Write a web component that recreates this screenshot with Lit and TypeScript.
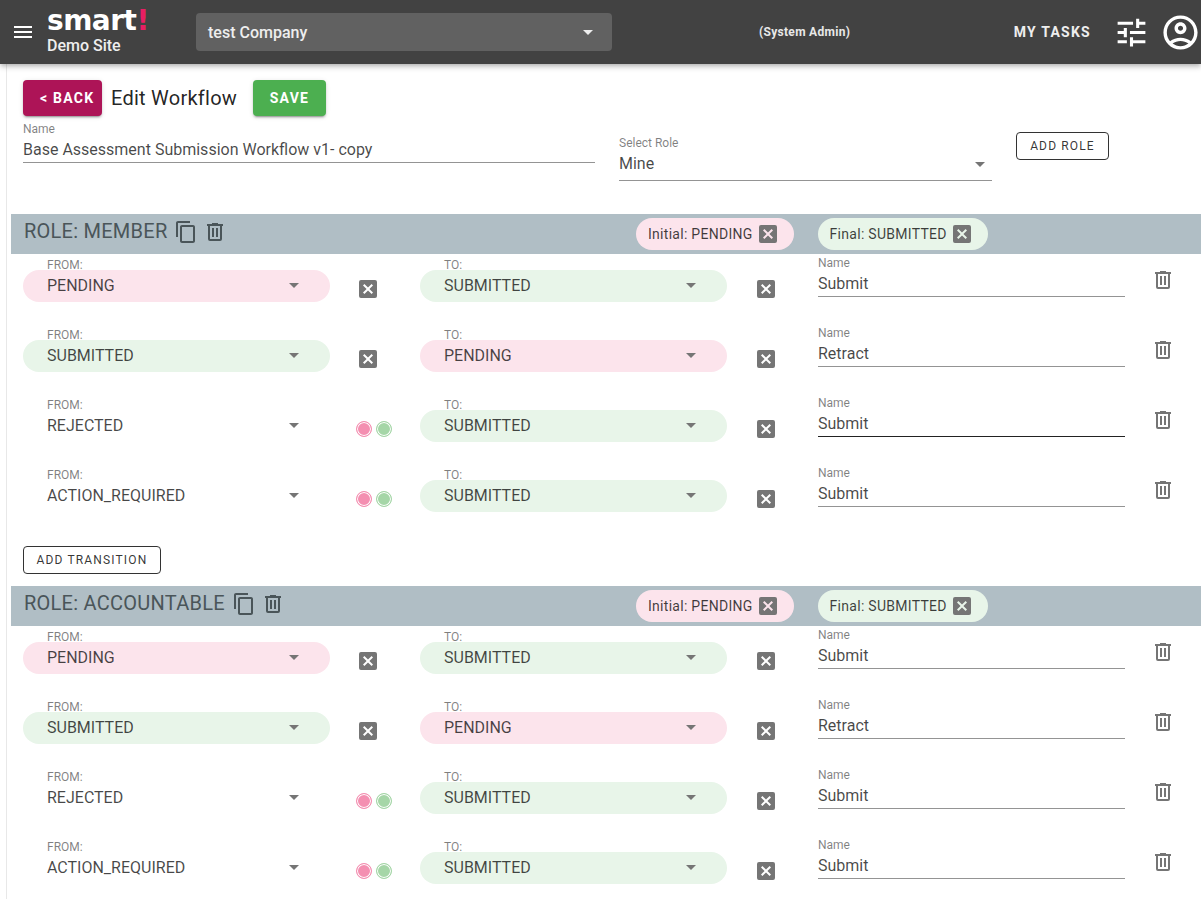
import { LitElement, html, css, svg } from 'lit';
import { customElement } from 'lit/decorators.js';

type Tone = 'pending' | 'submitted' | 'plain';

interface Transition {
  from: string;
  fromTone: Tone;
  to: string;
  toTone: Tone;
  name: string;
  focused?: boolean;
}

const PATHS = {
  menu: 'M3 18h18v-2H3v2zm0-5h18v-2H3v2zm0-7v2h18V6H3z',
  tune: 'M3 17v2h6v-2H3zM3 5v2h10V5H3zm10 16v-2h8v-2h-8v-2h-2v6h2zM7 9v2H3v2h4v2h2V9H7zm14 4v-2H11v2h10zm-6-4h2V7h4V5h-4V3h-2v6z',
  account: 'M12 2C6.48 2 2 6.48 2 12s4.48 10 10 10 10-4.48 10-10S17.52 2 12 2zM7.35 18.5C8.66 17.56 10.26 17 12 17s3.34.56 4.65 1.5C15.34 19.44 13.74 20 12 20s-3.34-.56-4.65-1.5zm10.79-1.38C16.45 15.8 14.32 15 12 15s-4.45.8-6.14 2.12C4.7 15.73 4 13.95 4 12c0-4.42 3.58-8 8-8s8 3.58 8 8c0 1.95-.7 3.73-1.86 5.12zM12 6c-1.93 0-3.5 1.57-3.5 3.5S10.07 13 12 13s3.5-1.57 3.5-3.5S13.93 6 12 6zm0 5c-.83 0-1.5-.67-1.5-1.5S11.17 8 12 8s1.5.67 1.5 1.5S12.83 11 12 11z',
  copy: 'M16 1H4c-1.1 0-2 .9-2 2v14h2V3h12V1zm3 4H8c-1.1 0-2 .9-2 2v14c0 1.1.9 2 2 2h11c1.1 0 2-.9 2-2V7c0-1.1-.9-2-2-2zm0 16H8V7h11v14z',
  trash: 'M9,3V4H4V6H5V19A2,2 0 0,0 7,21H17A2,2 0 0,0 19,19V6H20V4H15V3H9M7,6H17V19H7V6M9,8V17H11V8H9M13,8V17H15V8H13Z',
  close: 'M19,3H5A2,2 0 0,0 3,5V19A2,2 0 0,0 5,21H19A2,2 0 0,0 21,19V5A2,2 0 0,0 19,3M15.6,17L12,13.4L8.4,17L7,15.6L10.6,12L7,8.4L8.4,7L12,10.6L15.6,7L17,8.4L13.4,12L17,15.6L15.6,17Z',
};

const TRANSITIONS: Transition[] = [
  { from: 'PENDING', fromTone: 'pending', to: 'SUBMITTED', toTone: 'submitted', name: 'Submit' },
  { from: 'SUBMITTED', fromTone: 'submitted', to: 'PENDING', toTone: 'pending', name: 'Retract' },
  { from: 'REJECTED', fromTone: 'plain', to: 'SUBMITTED', toTone: 'submitted', name: 'Submit' },
  { from: 'ACTION_REQUIRED', fromTone: 'plain', to: 'SUBMITTED', toTone: 'submitted', name: 'Submit' },
];

const icon = (d: string, size: number, cls = '') => html`
  <svg class=${cls} width=${size} height=${size} viewBox="0 0 24 24" fill="currentColor">${svg`<path d=${d}></path>`}</svg>
`;

@customElement('app-root')
export class AppRoot extends LitElement {
  static override styles = css`
    :host {
      display: block;
      height: 100vh;
      overflow: hidden;
      font-family: Roboto, 'Noto Sans', sans-serif;
      color: rgba(0, 0, 0, 0.87);
      background: #fff;
    }

    svg {
      display: block;
      flex: none;
    }

    .topbar {
      position: relative;
      z-index: 2;
      display: flex;
      align-items: center;
      height: 64px;
      background: #424242;
      color: #fff;
      box-shadow: 0 2px 4px -1px rgba(0, 0, 0, 0.2), 0 4px 5px 0 rgba(0, 0, 0, 0.14);
    }

    .menu {
      margin-left: 11px;
      width: 36px;
    }

    .brand {
      width: 149px;
      color: #eee;
    }

    .logo {
      height: 26px;
      font-family: 'DejaVu Sans', sans-serif;
      font-weight: 700;
      font-size: 28px;
      line-height: 25px;
      letter-spacing: -0.5px;
      color: #fff;
    }

    .logo span {
      color: #e91e63;
    }

    .site {
      font-size: 16px;
      font-weight: 500;
      line-height: 20px;
      margin-top: 2px;
    }

    .company {
      display: flex;
      align-items: center;
      justify-content: space-between;
      box-sizing: border-box;
      width: 416px;
      height: 38px;
      padding: 0 19px 0 12px;
      background: #616161;
      border-radius: 4px;
      font-size: 16px;
      font-weight: 500;
      color: #eee;
    }

    .company .arrow {
      border-top-color: #eee;
    }

    .admin {
      margin-left: 147px;
      font-size: 12px;
      font-weight: 700;
      letter-spacing: 0.3px;
      color: #e8e8e8;
    }

    .tasks {
      margin-left: auto;
      font-size: 14px;
      font-weight: 700;
      letter-spacing: 1.25px;
      color: #eee;
    }

    .tune {
      margin-left: 22px;
    }

    .account {
      margin: 0 0 0 10px;
    }

    .arrow {
      flex: none;
      width: 0;
      height: 0;
      border-left: 5px solid transparent;
      border-right: 5px solid transparent;
      border-top: 5px solid #757575;
    }

    main {
      margin-left: 6px;
      padding-left: 4px;
      border-left: 1px solid #e8e8e8;
    }

    .title-row {
      display: flex;
      align-items: center;
      height: 36px;
      padding: 16px 0 0 12px;
    }

    .btn {
      display: flex;
      align-items: center;
      box-sizing: border-box;
      height: 36px;
      border-radius: 4px;
      color: #fff;
      font-size: 14px;
      font-weight: 700;
      letter-spacing: 1.25px;
      box-shadow: 0 3px 1px -2px rgba(0, 0, 0, 0.2), 0 2px 2px 0 rgba(0, 0, 0, 0.14), 0 1px 5px 0 rgba(0, 0, 0, 0.12);
    }

    .back {
      width: 79px;
      padding-left: 17px;
      background: #ad1457;
    }

    .save {
      justify-content: center;
      width: 73px;
      margin-left: 16px;
      background: #4caf50;
    }

    h1 {
      width: 126px;
      margin: 0 0 0 9px;
      font-size: 20px;
      font-weight: 400;
      line-height: 36px;
      letter-spacing: 0.25px;
      white-space: nowrap;
    }

    .form-row {
      display: grid;
      grid-template-columns: 572px 373px 93px;
      column-gap: 24px;
      align-items: start;
      height: 98px;
      padding: 6px 0 0 12px;
      box-sizing: border-box;
    }

    .field-label {
      font-size: 12px;
      line-height: 14px;
      color: rgba(0, 0, 0, 0.5);
    }

    .field-value {
      display: flex;
      align-items: center;
      justify-content: space-between;
      line-height: 24px;
      margin-top: 2px;
      font-size: 16px;
      color: rgba(0, 0, 0, 0.72);
      border-bottom: 1px solid #949494;
    }

    .field-value.focused {
      border-bottom-color: #222;
    }

    .role-select {
      margin-top: 14px;
    }

    .role-select .field-value {
      margin-top: 0;
      padding: 2px 7px 4px 0;
    }

    .outlined {
      display: flex;
      align-items: center;
      justify-content: center;
      box-sizing: border-box;
      height: 28px;
      border: 1px solid #333;
      border-radius: 4px;
      background: #fff;
      font-size: 12px;
      font-weight: 400;
      letter-spacing: 1.15px;
      color: rgba(0, 0, 0, 0.8);
    }

    .add-role {
      margin-top: 10px;
    }

    .add-transition {
      width: 138px;
      margin: 12px 0 12px 12px;
    }

    .role-head {
      display: flex;
      align-items: center;
      height: 40px;
      padding-left: 13px;
      background: #b0bec5;
    }

    .role-title {
      display: flex;
      align-items: center;
      width: 612px;
      height: 34px;
      margin-bottom: 6px;
      color: #4a5559;
    }

    .role-title span {
      font-size: 20px;
      letter-spacing: 0.25px;
      margin-right: 7px;
    }

    .role-title svg {
      margin-top: 2px;
    }

    .role-title svg:last-child {
      margin-left: 5px;
    }

    .chip {
      display: flex;
      align-items: center;
      box-sizing: border-box;
      height: 32px;
      padding: 0 14px 0 12px;
      margin-right: 24px;
      border-radius: 16px;
      font-size: 14px;
      letter-spacing: 0.28px;
      color: rgba(0, 0, 0, 0.75);
    }

    .chip svg {
      margin-left: 3px;
      color: #757575;
    }

    .pending {
      background: #fce4ec;
    }

    .submitted {
      background: #e8f5e9;
    }

    .row {
      display: grid;
      grid-template-columns: 307px 90px 307px 91px 307px 1fr;
      height: 70px;
      padding-left: 12px;
    }

    .pick {
      padding-top: 4px;
    }

    .pick-label {
      position: relative;
      padding-left: 24px;
      margin-bottom: -2px;
      font-size: 12px;
      line-height: 14px;
      color: rgba(0, 0, 0, 0.5);
    }

    .pill {
      display: flex;
      align-items: center;
      justify-content: space-between;
      box-sizing: border-box;
      height: 32px;
      padding: 0 31px 2px 24px;
      border-radius: 16px;
      font-size: 16px;
      color: rgba(0, 0, 0, 0.72);
    }

    .clear {
      padding: 23px 0 0 26px;
      color: #757575;
    }

    .clear.to {
      padding-left: 27px;
    }

    .dots {
      display: flex;
      gap: 4px;
      padding: 27px 0 0 26px;
    }

    .dot {
      box-sizing: border-box;
      width: 16px;
      height: 16px;
      border-radius: 50%;
      border: 1px solid;
      box-shadow: inset 0 0 0 1px #fff;
    }

    .dot.red {
      background: #f48fb1;
      border-color: #f48fb1;
    }

    .dot.green {
      background: #a5d6a7;
      border-color: #a5d6a7;
    }

    .name {
      padding-top: 2px;
    }

    .remove {
      padding: 14px 0 0 26px;
      color: #757575;
    }
  `;

  private renderRow(t: Transition) {
    return html`
      <div class="row">
        <div class="pick">
          <div class="pick-label">FROM:</div>
          <div class="pill ${t.fromTone}">${t.from}<i class="arrow"></i></div>
        </div>
        ${t.fromTone === 'plain'
          ? html`<div class="dots"><div class="dot red"></div><div class="dot green"></div></div>`
          : html`<div class="clear">${icon(PATHS.close, 24)}</div>`}
        <div class="pick">
          <div class="pick-label">TO:</div>
          <div class="pill ${t.toTone}">${t.to}<i class="arrow"></i></div>
        </div>
        <div class="clear to">${icon(PATHS.close, 24)}</div>
        <div class="name">
          <div class="field-label">Name</div>
          <div class="field-value ${t.focused ? 'focused' : ''}">${t.name}</div>
        </div>
        <div class="remove">${icon(PATHS.trash, 24)}</div>
      </div>
    `;
  }

  private renderRole(role: string, rows: Transition[]) {
    return html`
      <section>
        <div class="role-head">
          <div class="role-title">
            <span>ROLE: ${role}</span>
            ${icon(PATHS.copy, 24)}
            ${icon(PATHS.trash, 24)}
          </div>
          <div class="chip pending">Initial: PENDING ${icon(PATHS.close, 24)}</div>
          <div class="chip submitted">Final: SUBMITTED ${icon(PATHS.close, 24)}</div>
        </div>
        ${rows.map((r) => this.renderRow(r))}
      </section>
    `;
  }

  override render() {
    const member = TRANSITIONS.map((t, i) => (i === 2 ? { ...t, focused: true } : t));
    return html`
      <header class="topbar">
        <div class="menu">${icon(PATHS.menu, 24)}</div>
        <div class="brand">
          <div class="logo">smart<span>!</span></div>
          <div class="site">Demo Site</div>
        </div>
        <div class="company">test Company<i class="arrow"></i></div>
        <div class="admin">(System Admin)</div>
        <div class="tasks">MY TASKS</div>
        ${icon(PATHS.tune, 37, 'tune')}
        ${icon(PATHS.account, 41, 'account')}
      </header>
      <main>
        <div class="title-row">
          <div class="btn back">&lt; BACK</div>
          <h1>Edit Workflow</h1>
          <div class="btn save">SAVE</div>
        </div>
        <div class="form-row">
          <div>
            <div class="field-label">Name</div>
            <div class="field-value">Base Assessment Submission Workflow v1- copy</div>
          </div>
          <div class="role-select">
            <div class="field-label">Select Role</div>
            <div class="field-value">Mine<i class="arrow"></i></div>
          </div>
          <div class="outlined add-role">ADD ROLE</div>
        </div>
        ${this.renderRole('MEMBER', member)}
        <div class="outlined add-transition">ADD TRANSITION</div>
        ${this.renderRole('ACCOUNTABLE', TRANSITIONS)}
      </main>
    `;
  }
}
